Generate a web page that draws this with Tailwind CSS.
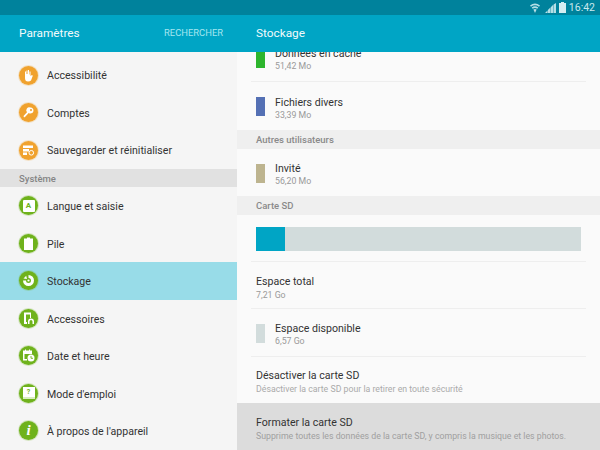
<!DOCTYPE html>
<html lang="fr">

<head>
    <meta charset="UTF-8" />
    <title>Stockage</title>
    <script src="https://cdn.jsdelivr.net/npm/@tailwindcss/browser@4"></script>
</head>

<body class="w-[600px] h-[450px] overflow-hidden bg-[#fafafa] font-['Roboto',sans-serif]">

    <!-- status bar -->
    <div class="h-[15px] bg-[#00829c] flex items-center justify-end pr-[5px] text-[#b5dfe6]">
        <svg width="10" height="10" viewBox="0 0 10 10" fill="currentColor">
            <path d="M0 2.500 Q5 -1.500 10 2.500 L9 3.700 Q5 .800 1 3.700Z" />
            <path d="M1.700 4.500 Q5 2 8.300 4.500 L7.300 5.700 Q5 4.300 2.700 5.700Z" />
            <path d="M3.400 6.500 Q5 5.400 6.600 6.500 L5 10Z" />
        </svg>
        <svg width="11" height="10" viewBox="0 0 11 10" fill="currentColor" class="ml-[5px]">
            <path d="M0 10 2.500 7.500V10ZM2.900 10V7.100L5.400 4.600V10ZM5.800 10V4.200L8.200 1.800V10ZM8.600 10V1.400L11 0V10Z" />
        </svg>
        <svg width="7" height="11" viewBox="0 0 7 11" fill="#d5eef2" class="ml-[3px]">
            <path d="M2 0H5V1H7V11H0V1H2Z" />
        </svg>
        <span class="text-[10.500px] leading-none ml-[3px] pt-px text-[#c9e8ee]">16:42</span>
    </div>

    <div class="flex h-[435px]">
        <!-- settings list -->
        <div class="w-[237px] shrink-0 bg-[#f5f5f5]">
            <div class="h-[37px] bg-[#00a5c5] flex items-center justify-between pl-[19px] pr-[14px]">
                <span class="text-[#f2fbfc] text-[11.800px]">Paramètres</span>
                <span class="text-[#a5e6f0] text-[9.400px]">RECHERCHER</span>
            </div>
            <div class="pt-[4.500px]">
                <div class="h-[37.500px] flex items-center pl-[19px] gap-[9px] text-[10.600px] text-[#333]">
                    <span class="w-[19px] h-[19px] rounded-full bg-[#f0a22e] ring-1 ring-[#f0a22e]/25 flex items-center justify-center">
                        <svg width="13" height="13" viewBox="0 0 13 13" fill="#fff"><path d="M3 5V2.500h1V5h.5V1.500h1V5h.5V1h1v4.500h.5V2.500h1V7l1.500-1 .8.800L9 11.500Q8 12.500 6 12.500 3 12.500 3 9Z" /></svg>
                    </span>
                    <span class="pt-[2px]">Accessibilité</span>
                </div>
                <div class="h-[37.500px] flex items-center pl-[19px] gap-[9px] text-[10.600px] text-[#333]">
                    <span class="w-[19px] h-[19px] rounded-full bg-[#f0a22e] ring-1 ring-[#f0a22e]/25 flex items-center justify-center">
                        <svg width="13" height="13" viewBox="0 0 13 13" fill="#fff"><path fill-rule="evenodd" d="M8.500 1.500a3 3 0 1 1-1.800 5.400L3.500 10.500 2 11.500 1.500 10 5 6.200A3 3 0 0 1 8.500 1.500ZM9 3a1 1 0 1 0 .01 0Z" /></svg>
                    </span>
                    <span class="pt-[2px]">Comptes</span>
                </div>
                <div class="h-[37.500px] flex items-center pl-[19px] gap-[9px] text-[10.600px] text-[#333]">
                    <span class="w-[19px] h-[19px] rounded-full bg-[#f0a22e] ring-1 ring-[#f0a22e]/25 flex items-center justify-center">
                        <svg width="13" height="13" viewBox="0 0 13 13" fill="#fff"><path d="M1 1.500h10v2.500H1ZM1 5h6v2.500H1ZM1 8.500h4V11H1Z" /><circle cx="9.300" cy="8.800" r="2.300" fill="none" stroke="#fff" /></svg>
                    </span>
                    <span class="pt-[2px]">Sauvegarder et réinitialiser</span>
                </div>
            </div>
            <div class="h-[18px] bg-[#e1e1e1] flex items-center pl-[19px] pt-[2px] text-[9.500px] font-medium text-[#858585]">Système</div>
            <div class="h-[37.500px] flex items-center pl-[19px] gap-[9px] text-[10.600px] text-[#333]">
                <span class="w-[19px] h-[19px] rounded-full bg-[#6fb21c] ring-1 ring-[#6fb21c]/25 flex items-center justify-center">
                    <span class="w-[12px] h-[12px] rounded-[1px] bg-white flex items-center justify-center text-[8px] font-bold text-[#6fb21c]">A</span>
                </span>
                <span class="pt-[3px]">Langue et saisie</span>
            </div>
            <div class="h-[37.500px] flex items-center pl-[19px] gap-[9px] text-[10.600px] text-[#333]">
                <span class="w-[19px] h-[19px] rounded-full bg-[#6fb21c] ring-1 ring-[#6fb21c]/25 flex items-center justify-center">
                    <svg width="9" height="13" viewBox="0 0 9 13" fill="#fff"><path d="M3 0.500H6V1.500H9V13H0V1.500H3Z" /></svg>
                </span>
                <span class="pt-[3px]">Pile</span>
            </div>
            <div class="h-[37.500px] flex items-center pl-[19px] gap-[9px] text-[10.600px] text-[#333] bg-[#98dce8]">
                <span class="w-[19px] h-[19px] rounded-full bg-[#6fb21c] ring-1 ring-[#6fb21c]/25 flex items-center justify-center">
                    <svg width="13" height="13" viewBox="0 0 13 13" fill="none"><path d="M6.500 1a5.500 5.500 0 1 1-5.500 5.500H4a2.500 2.500 0 1 0 2.500-2.500Z" fill="#fff" /><path d="M1.500 4.500 4.200 1.800 5 5Z" fill="#fff" /><circle cx="6.500" cy="6.500" r="1.100" fill="#fff" /></svg>
                </span>
                <span class="pt-[2px]">Stockage</span>
            </div>
            <div class="h-[37.500px] flex items-center pl-[19px] gap-[9px] text-[10.600px] text-[#333]">
                <span class="w-[19px] h-[19px] rounded-full bg-[#6fb21c] ring-1 ring-[#6fb21c]/25 flex items-center justify-center">
                    <svg width="13" height="13" viewBox="0 0 13 13" fill="#fff"><path d="M2 0.500h7V6H8V2.500H4V10h1v2H2Z" /><path d="M6 12V9.500a3 3 0 0 1 6 0V12H10.500V9.500a1.500 1.500 0 0 0-3 0V12Z" /></svg>
                </span>
                <span class="pt-[3px]">Accessoires</span>
            </div>
            <div class="h-[37.500px] flex items-center pl-[19px] gap-[9px] text-[10.600px] text-[#333]">
                <span class="w-[19px] h-[19px] rounded-full bg-[#6fb21c] ring-1 ring-[#6fb21c]/25 flex items-center justify-center">
                    <svg width="13" height="13" viewBox="0 0 13 13" fill="#fff"><path d="M1 1.500h2V.500h1v1h3V.500h1v1h2V5H2.500v5H5v1.500H1Z" /><circle cx="9" cy="9" r="3.500" /><path d="M9 7v2.300h2" fill="none" stroke="#6fb21c" stroke-width=".9" /></svg>
                </span>
                <span class="pt-[2px]">Date et heure</span>
            </div>
            <div class="h-[37.500px] flex items-center pl-[19px] gap-[9px] text-[10.600px] text-[#333]">
                <span class="w-[19px] h-[19px] rounded-full bg-[#6fb21c] ring-1 ring-[#6fb21c]/25 flex items-center justify-center">
                    <span class="w-[12px] h-[12px] bg-white border-b-2 border-[#d8eec0] flex items-center justify-center text-[7px] font-bold text-[#6fb21c]">?</span>
                </span>
                <span class="pt-[3px]">Mode d'emploi</span>
            </div>
            <div class="h-[37.500px] flex items-center pl-[19px] gap-[9px] text-[10.600px] text-[#333]">
                <span class="w-[19px] h-[19px] rounded-full bg-[#6fb21c] ring-1 ring-[#6fb21c]/25 flex items-center justify-center text-white text-[15px] font-bold italic font-['Liberation_Serif',serif] leading-none">i</span>
                <span class="pt-[2px]">À propos de l'appareil</span>
            </div>
        </div>

        <!-- storage detail -->
        <div class="flex-1 min-w-0 flex flex-col">
            <div class="h-[37px] shrink-0 relative z-10 bg-[#00a5c5] flex items-center pl-[19px] text-[#f2fbfc] text-[11.800px]">Stockage</div>
            <div class="h-[48px] shrink-0 -mt-[18px] mx-[14px] px-[5px] pt-[1px] border-b border-[#eee] flex items-center gap-[10px]">
                <span class="w-[9px] h-[19px] bg-[#2db52d]"></span>
                <div class="pt-[3px]">
                    <div class="text-[10.600px] leading-[13px] text-[#333]">Données en cache</div>
                    <div class="text-[8.750px] leading-[12px] text-[#999]">51,42 Mo</div>
                </div>
            </div>
            <div class="h-[48px] shrink-0 flex items-center pl-[19px] pt-[1px] gap-[10px]">
                <span class="w-[9px] h-[19px] bg-[#5470b4]"></span>
                <div class="pt-[3px]">
                    <div class="text-[10.600px] leading-[13px] text-[#333]">Fichiers divers</div>
                    <div class="text-[8.750px] leading-[12px] text-[#999]">33,39 Mo</div>
                </div>
            </div>
            <div class="h-[19px] shrink-0 bg-[#efefef] flex items-center pl-[19px] pt-[2px] text-[9.500px] font-medium text-[#8a8a8a]">Autres utilisateurs</div>
            <div class="h-[47px] shrink-0 flex items-center pl-[19px] pt-[1px] gap-[10px]">
                <span class="w-[9px] h-[19px] bg-[#bdb48f]"></span>
                <div class="pt-[3px]">
                    <div class="text-[10.600px] leading-[13px] text-[#333]">Invité</div>
                    <div class="text-[8.750px] leading-[12px] text-[#999]">56,20 Mo</div>
                </div>
            </div>
            <div class="h-[19px] shrink-0 bg-[#efefef] flex items-center pl-[19px] pt-[2px] text-[9.500px] font-medium text-[#8a8a8a]">Carte SD</div>
            <div class="h-[47px] shrink-0 pt-[12px] mx-[14px] border-b border-[#eee] px-[5px]">
                <div class="h-[24px] bg-[#d2dcdc] w-[325px]">
                    <div class="h-full w-[29px] bg-[#00a5c5]"></div>
                </div>
            </div>
            <div class="h-[47px] shrink-0 mx-[14px] px-[5px] pt-[5px] border-b border-[#eee] flex flex-col justify-center">
                <div class="text-[10.600px] leading-[14px] text-[#333]">Espace total</div>
                <div class="text-[8.750px] leading-[12px] text-[#999]">7,21 Go</div>
            </div>
            <div class="h-[48px] shrink-0 mx-[14px] px-[5px] pt-[1px] border-b border-[#eee] flex items-center gap-[10px]">
                <span class="w-[9px] h-[19px] bg-[#d2dcdc]"></span>
                <div class="pt-[3px]">
                    <div class="text-[10.600px] leading-[13px] text-[#333]">Espace disponible</div>
                    <div class="text-[8.750px] leading-[12px] text-[#999]">6,57 Go</div>
                </div>
            </div>
            <div class="h-[46px] shrink-0 mx-[14px] px-[5px] pt-[4px] flex flex-col justify-center">
                <div class="text-[10.600px] leading-[14px] text-[#333]">Désactiver la carte SD</div>
                <div class="text-[8.750px] leading-[12px] text-[#aaa]">Désactiver la carte SD pour la retirer en toute sécurité</div>
            </div>
            <div class="flex-1 bg-[#dcdcdc] pl-[19px] pt-[4px] flex flex-col justify-center">
                <div class="text-[10.600px] leading-[14px] text-[#333]">Formater la carte SD</div>
                <div class="text-[8.750px] leading-[12px] text-[#a0a0a0]">Supprime toutes les données de la carte SD, y compris la musique et les photos.</div>
            </div>
        </div>
    </div>

</body>

</html>
